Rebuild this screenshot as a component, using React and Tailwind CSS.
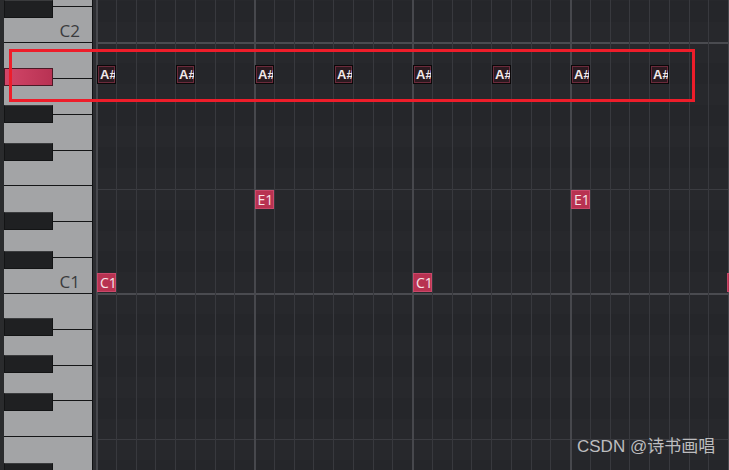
import React from "react";

const SEMI = 20.9;
const WHITE = 250.8 / 7;

const whiteKeys = ["D2", "C2", "B1", "A1", "G1", "F1", "E1", "D1", "C1", "B0", "A0", "G0", "F0", "E0", "D0"];
const rowNames = ["D2", "C#2", "C2", "B1", "A#1", "A1", "G#1", "G1", "F#1", "F1", "E1", "D#1", "D1", "C#1", "C1", "B0", "A#0", "A0", "G#0", "G0", "F#0", "F0", "E0", "D#0", "D0"];

const octaveLines = [43 - 250.8, 43, 293.8];
const blackOffsets = [24.5, 61.5, 99.5, 169, 208];
const blackKeys = [];
octaveLines.forEach((L) => {
  blackOffsets.forEach((o, i) => {
    const top = L + o;
    if (top > -20 && top < 470) blackKeys.push({ top, pink: L === 43 && i === 0 });
  });
});

const cols = Array.from({ length: 33 }, (_, i) => i);

function Note({ left, top, label, ghost }) {
  if (ghost) {
    return (
      <div
        className="absolute w-[19px] h-[19px] bg-[#2b1a20] border border-[#0b0708] shadow-[inset_0_0_0_1px_#6b2a3b] overflow-hidden flex items-center pl-[2px] text-[13px] font-bold leading-none text-[#f1e8ea] whitespace-nowrap"
        style={{ left, top, fontFamily: '"Liberation Sans", Arial, sans-serif' }}
      >
        {label}
      </div>
    );
  }
  return (
    <div
      className="absolute w-[19px] h-[19px] bg-[#b83251] border border-[#c9486a] overflow-hidden flex items-center pl-[2px] text-[14px] leading-none text-[#f6e4e8] whitespace-nowrap"
      style={{ left, top, fontFamily: '"Open Sans", "Liberation Sans", sans-serif' }}
    >
      {label}
    </div>
  );
}

export default function App() {
  const ghostNotes = Array.from({ length: 8 }, (_, k) => 1 + 79 * k);
  return (
    <div className="relative w-[729px] h-[470px] overflow-hidden flex bg-[#27282b]">
      {/* left strip */}
      <div className="w-[4px] shrink-0 bg-[#2a2b2d]" />

      {/* piano */}
      <div className="relative w-[88px] shrink-0 overflow-hidden bg-[#a3a4a6]">
        <div className="flex flex-col mt-[-28.6px]">
          {whiteKeys.map((k) => (
            <div
              key={k}
              className="shrink-0 box-border border-b border-[#141516] bg-[#a3a4a6] flex items-end justify-end pr-[12px] pb-[1px]"
              style={{ height: WHITE }}
            >
              {(k === "C2" || k === "C1") && (
                <span
                  className="text-[17px] leading-[20px] text-[#3a3b3d]"
                  style={{ fontFamily: '"Open Sans", "Noto Sans", sans-serif' }}
                >
                  {k}
                </span>
              )}
            </div>
          ))}
        </div>
        {blackKeys.map((b, i) => (
          <div
            key={i}
            className={
              b.pink
                ? "absolute left-0 w-[49px] h-[18px] border border-[#4a1a26] bg-[linear-gradient(90deg,#d24668,#b83253)]"
                : "absolute left-0 w-[49px] h-[18px] border border-[#131415] border-t-[#3a3b3d] bg-[#1f2022]"
            }
            style={{ top: b.top }}
          />
        ))}
      </div>

      {/* separator */}
      <div className="w-[1px] shrink-0 bg-[#101113]" />
      <div className="w-[3px] shrink-0 bg-[#2c2d31]" />

      {/* grid */}
      <div className="relative flex-1 overflow-hidden">
        <div className="flex flex-col mt-[-20.2px]">
          {rowNames.map((r) => {
            const black = r.includes("#");
            const isB = r.startsWith("B");
            const isE = r.startsWith("E");
            return (
              <div
                key={r}
                className={
                  "shrink-0 box-border " +
                  (black ? "bg-[#25262a] " : "bg-[#27282c] ") +
                  (isB ? "border-t-2 border-[#4a4b50] " : "") +
                  (isE ? "border-t border-[#3b3c41] " : "")
                }
                style={{ height: SEMI }}
              />
            );
          })}
        </div>
        <div className="absolute inset-0 flex">
          {cols.map((c) => (
            <div
              key={c}
              className={
                "shrink-0 w-[19.75px] h-full " +
                (c % 8 === 0 ? "border-l-2 border-[#47484d]" : "border-l border-[#38393e]")
              }
            />
          ))}
        </div>

        {ghostNotes.map((x, i) => (
          <Note key={i} left={x} top={65} label="A#" ghost />
        ))}
        <Note left={158.5} top={190} label="E1" />
        <Note left={475} top={190} label="E1" />
        <Note left={1} top={273} label="C1" />
        <Note left={317} top={273} label="C1" />
        <Note left={631} top={273} label="" />
      </div>

      {/* red highlight box */}
      <div className="absolute left-[9px] top-[49px] w-[686px] h-[53px] border-[3px] border-[#ee1d2a]" />

      {/* watermark */}
      <div
        className="absolute left-[577px] top-[435px] text-[17px] leading-[24px] text-[#bdbdbf] whitespace-nowrap"
        style={{ fontFamily: '"Liberation Sans", "Noto Sans CJK SC", sans-serif' }}
      >
        CSDN @诗书画唱
      </div>
    </div>
  );
}
